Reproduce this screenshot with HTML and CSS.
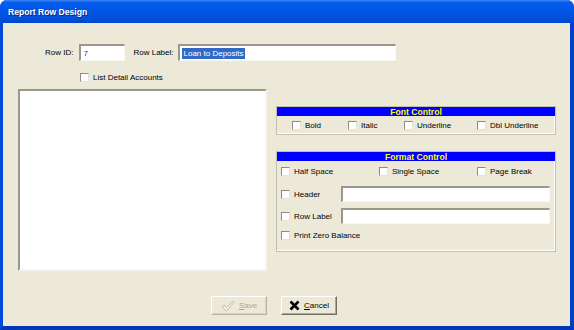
FILE: index.html
```html
<!DOCTYPE html>
<html lang="en">
<head>
    <meta charset="UTF-8">
    <title>Report Row Design</title>
    <link rel="stylesheet" href="styles.css">
</head>
<body>
    <div class="window">
        <div class="titlebar">Report Row Design</div>
        <div class="client">
            <div class="id-row">
                <span class="lbl lbl-id">Row ID:</span>
                <div class="txt txt-id">7</div>
                <span class="lbl lbl-rowlabel">Row Label:</span>
                <div class="txt txt-label"><span class="sel">Loan to Deposits</span></div>
            </div>

            <div class="check detail-check"><span class="box"></span>List Detail Accounts</div>

            <div class="main">
                <div class="listbox"></div>

                <div class="controls">
                    <div class="group font-group">
                        <div class="group-title">Font Control</div>
                        <div class="font-row">
                            <div class="check w56"><span class="box"></span>Bold</div>
                            <div class="check w56"><span class="box"></span>Italic</div>
                            <div class="check w73"><span class="box"></span>Underline</div>
                            <div class="check"><span class="box"></span>Dbl Underline</div>
                        </div>
                    </div>

                    <div class="group format-group">
                        <div class="group-title">Format Control</div>
                        <div class="format-row first">
                            <div class="check w98"><span class="box"></span>Half Space</div>
                            <div class="check w98"><span class="box"></span>Single Space</div>
                            <div class="check"><span class="box"></span>Page Break</div>
                        </div>
                        <div class="format-row field">
                            <div class="check w60"><span class="box"></span>Header</div>
                            <div class="txt txt-wide"></div>
                        </div>
                        <div class="format-row field">
                            <div class="check w60"><span class="box"></span>Row Label</div>
                            <div class="txt txt-wide"></div>
                        </div>
                        <div class="format-row last">
                            <div class="check"><span class="box"></span>Print Zero Balance</div>
                        </div>
                    </div>
                </div>
            </div>

            <div class="buttons">
                <div class="btn disabled">
                    <svg width="14" height="12" viewBox="0 0 14 12">
                        <path d="M1 7 L3 5 L5.5 7.5 L12 1 L13 2.5 L5.5 11 Z" fill="#f4f2ea" stroke="#b8b4a4" stroke-width="0.9"/>
                    </svg>
                    <span><u>S</u>ave</span>
                </div>
                <div class="btn">
                    <svg width="11" height="11" viewBox="0 0 11 11">
                        <path d="M1.5 1.5 L9.5 9.5 M9.5 1.5 L1.5 9.5" stroke="#000" stroke-width="2.6"/>
                    </svg>
                    <span><u>C</u>ancel</span>
                </div>
            </div>
        </div>
    </div>
</body>
</html>
```

FILE: styles.css
```css
body {
    margin: 0;
    background-color: #fff;
    font-family: "Liberation Sans", Arial, sans-serif;
    font-size: 8px;
    color: #000;
}
.window {
    width: 574px;
    height: 330px;
    box-sizing: border-box;
    border-radius: 7px 7px 0 0;
    background: #0055e5;
    border-left: 3px solid #0048d8;
    border-right: 4px solid #0040c8;
    border-bottom: 4px solid #0038b8;
    display: flex;
    flex-direction: column;
}
.titlebar {
    height: 23px;
    margin: 0 -4px 0 -3px;
    padding-left: 8px;
    border-radius: 7px 7px 0 0;
    background: linear-gradient(to bottom, #3d8cf8 0%, #0a5ceb 10%, #0057e6 35%, #0052df 75%, #0046cc 100%);
    color: #fff;
    font-weight: bold;
    font-size: 8.6px;
    line-height: 24px;
    text-shadow: 1px 1px 0 #0a2a80;
}
.client {
    flex: 1;
    background-color: #ece9d8;
    padding-top: 21px;
}
.id-row {
    display: flex;
    align-items: center;
    margin-left: 42px;
    height: 17px;
}
.lbl-id {
    margin-right: 6px;
}
.lbl-rowlabel {
    margin-left: 8px;
    margin-right: 5px;
}
.txt {
    box-sizing: border-box;
    background-color: #fff;
    border-top: 2px solid #9b988a;
    border-left: 2px solid #9b988a;
    border-bottom: 1px solid #f8f7f2;
    border-right: 1px solid #f8f7f2;
    padding-left: 2px;
    display: flex;
    align-items: center;
}
.txt-id {
    width: 46px;
    height: 17px;
    color: #1f3fc0;
}
.txt-label {
    width: 218px;
    height: 17px;
}
.sel {
    background-color: #316ac5;
    color: #fff;
    padding: 0 1px;
    line-height: 11px;
}
.check {
    display: flex;
    align-items: center;
    flex-shrink: 0;
}
.box {
    width: 9px;
    height: 9px;
    box-sizing: border-box;
    background-color: #fff;
    border-top: 1px solid #8d8b80;
    border-left: 1px solid #8d8b80;
    border-bottom: 1px solid #e4e2d8;
    border-right: 1px solid #e4e2d8;
    margin-right: 4px;
}
.detail-check {
    margin: 12px 0 0 77px;
}
.main {
    display: flex;
    margin-top: 7px;
    margin-left: 15px;
}
.listbox {
    width: 249px;
    height: 182px;
    box-sizing: border-box;
    background-color: #fff;
    border-top: 2px solid #9b988a;
    border-left: 2px solid #9b988a;
    border-bottom: 2px solid #f6f5ef;
    border-right: 2px solid #f6f5ef;
}
.controls {
    margin-left: 9px;
    margin-top: 17px;
    display: flex;
    flex-direction: column;
    gap: 16px;
}
.group {
    width: 280px;
    box-sizing: border-box;
    border: 1px solid #c3bfae;
    box-shadow: inset -1px -1px 0 #fff;
}
.group-title {
    height: 9px;
    background-color: #0000ff;
    color: #ffff00;
    font-weight: bold;
    font-size: 8.6px;
    line-height: 10px;
    text-align: center;
}
.font-row {
    display: flex;
    align-items: center;
    height: 18px;
    padding-left: 15px;
}
.w56 { width: 56px; }
.w73 { width: 73px; }
.w98 { width: 98px; }
.w60 { width: 60px; }
.format-group {
    padding-bottom: 11px;
}
.format-row {
    display: flex;
    align-items: center;
    padding-left: 4px;
}
.format-row.first {
    height: 10px;
    margin-top: 5px;
}
.format-row.field {
    height: 16px;
    margin-top: 10px;
}
.format-row.field + .format-row.field {
    margin-top: 6px;
}
.format-row.last {
    height: 10px;
    margin-top: 6px;
}
.txt-wide {
    width: 209px;
    height: 16px;
}
.buttons {
    display: flex;
    gap: 14px;
    margin-top: 25px;
    margin-left: 208px;
}
.btn {
    width: 56px;
    height: 19px;
    box-sizing: border-box;
    display: flex;
    align-items: center;
    justify-content: center;
    gap: 4px;
    background-color: #ece9d8;
    border-top: 1px solid #fff;
    border-left: 1px solid #fff;
    border-right: 1px solid #716f64;
    border-bottom: 1px solid #716f64;
    box-shadow: inset -1px -1px 0 #aca899;
}
.btn.disabled {
    color: #aca899;
    border-right-color: #b8b4a4;
    border-bottom-color: #b8b4a4;
    box-shadow: inset -1px -1px 0 #d8d4c4;
}
```
